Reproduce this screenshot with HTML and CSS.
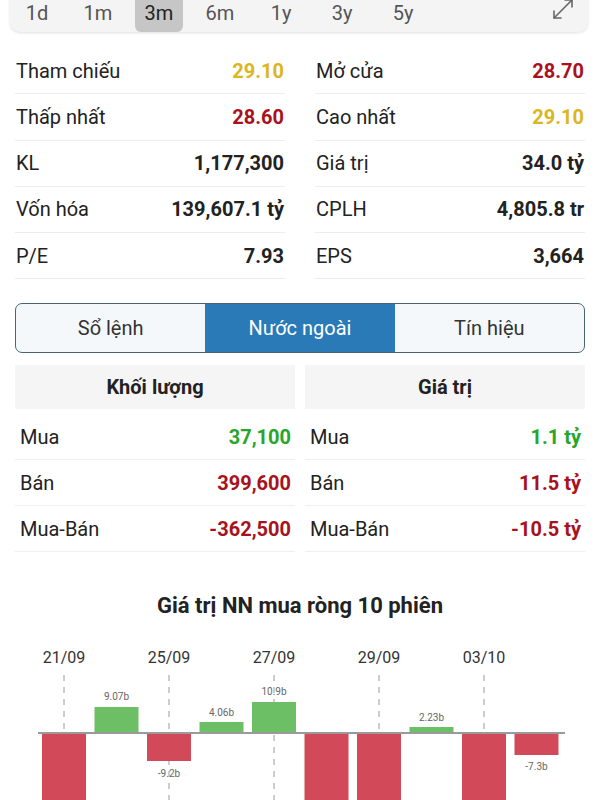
FILE: index.html
```html
<!DOCTYPE html>
<html lang="vi">
<head>
    <meta charset="UTF-8">
    <meta name="viewport" content="width=device-width, initial-scale=1.0">
    <title>Chi tiết cổ phiếu</title>
    <link rel="stylesheet" href="styles.css">
</head>
<body>
    <div class="range-bar">
        <span class="range-item">1d</span>
        <span class="range-item">1m</span>
        <span class="range-item active">3m</span>
        <span class="range-item">6m</span>
        <span class="range-item">1y</span>
        <span class="range-item">3y</span>
        <span class="range-item">5y</span>
        <span class="expand">
            <svg width="22" height="22" viewBox="0 0 22 22" fill="none" stroke="#666" stroke-width="1.6" stroke-linecap="round" stroke-linejoin="round">
                <path d="M2 20 L20 2"/>
                <path d="M13 2 H20 V9"/>
                <path d="M2 13 V20 H9"/>
            </svg>
        </span>
    </div>

    <div class="stats">
        <div class="stat"><span>Tham chiếu</span><b class="ref">29.10</b></div>
        <div class="stat"><span>Mở cửa</span><b class="down">28.70</b></div>
        <div class="stat"><span>Thấp nhất</span><b class="down">28.60</b></div>
        <div class="stat"><span>Cao nhất</span><b class="ref">29.10</b></div>
        <div class="stat"><span>KL</span><b>1,177,300</b></div>
        <div class="stat"><span>Giá trị</span><b>34.0 tỷ</b></div>
        <div class="stat"><span>Vốn hóa</span><b>139,607.1 tỷ</b></div>
        <div class="stat"><span>CPLH</span><b>4,805.8 tr</b></div>
        <div class="stat"><span>P/E</span><b>7.93</b></div>
        <div class="stat"><span>EPS</span><b>3,664</b></div>
    </div>

    <div class="tabs">
        <div class="tab">Sổ lệnh</div>
        <div class="tab active">Nước ngoài</div>
        <div class="tab">Tín hiệu</div>
    </div>

    <div class="foreign">
        <div class="foreign-head">Khối lượng</div>
        <div class="foreign-head">Giá trị</div>
        <div class="foreign-row"><span>Mua</span><b class="up">37,100</b></div>
        <div class="foreign-row"><span>Mua</span><b class="up">1.1 tỷ</b></div>
        <div class="foreign-row"><span>Bán</span><b class="down">399,600</b></div>
        <div class="foreign-row"><span>Bán</span><b class="down">11.5 tỷ</b></div>
        <div class="foreign-row"><span>Mua-Bán</span><b class="down">-362,500</b></div>
        <div class="foreign-row"><span>Mua-Bán</span><b class="down">-10.5 tỷ</b></div>
    </div>

    <div class="chart">
        <h2 class="chart-title">Giá trị NN mua ròng 10 phiên</h2>
        <svg class="chart-svg" width="600" height="183" viewBox="0 0 600 183">
            <!-- date labels -->
            <g class="dates">
                <text x="64" y="45">21/09</text>
                <text x="169" y="45">25/09</text>
                <text x="274" y="45">27/09</text>
                <text x="379" y="45">29/09</text>
                <text x="484" y="45">03/10</text>
            </g>
            <!-- value labels -->
            <g class="values">
                <text x="116.5" y="81.5">9.07b</text>
                <text x="169" y="158.5">-9.2b</text>
                <text x="221.5" y="97.5">4.06b</text>
                <text x="274" y="76.5">10.9b</text>
                <text x="431.5" y="102.5">2.23b</text>
                <text x="536.5" y="151.5">-7.3b</text>
            </g>
            <!-- grid lines -->
            <g stroke="#9a9a9a" stroke-width="1" stroke-dasharray="6 6">
                <line x1="64" y1="57" x2="64" y2="183"/>
                <line x1="169" y1="57" x2="169" y2="183"/>
                <line x1="274" y1="57" x2="274" y2="183"/>
                <line x1="379" y1="57" x2="379" y2="183"/>
                <line x1="484" y1="57" x2="484" y2="183"/>
            </g>
            <line x1="38" y1="115" x2="565" y2="115" stroke="#9a9a9a" stroke-width="2"/>
            <!-- bars -->
            <g class="neg">
                <rect x="42" y="116" width="44" height="70"/>
                <rect x="147" y="116" width="44" height="27"/>
                <rect x="304.5" y="116" width="44" height="70"/>
                <rect x="357" y="116" width="44" height="70"/>
                <rect x="462" y="116" width="44" height="70"/>
                <rect x="514.5" y="116" width="44" height="21"/>
            </g>
            <g class="pos">
                <rect x="94.5" y="89" width="44" height="25"/>
                <rect x="199.5" y="104" width="44" height="10"/>
                <rect x="252" y="84" width="44" height="30"/>
                <rect x="409.5" y="109" width="44" height="5"/>
            </g>
        </svg>
    </div>
</body>
</html>
```

FILE: styles.css
```css
body {
    margin: 0;
    background: #fff;
    font-family: Roboto, "Liberation Sans", sans-serif;
    color: #222;
    overflow: hidden;
}
.range-bar {
    display: flex;
    align-items: flex-end;
    gap: 13px;
    height: 42px;
    margin: -10px 12px 0 10px;
    padding-left: 3px;
    background: #f4f4f4;
    border-radius: 0 0 10px 10px;
    box-shadow: 0 1px 3px rgba(0,0,0,0.12);
}
.range-item {
    width: 48px;
    height: 100%;
    display: flex;
    align-items: flex-end;
    justify-content: center;
    box-sizing: border-box;
    padding-bottom: 7px;
    font-size: 20px;
    line-height: 24px;
    color: #555;
    border-radius: 6px;
}
.range-item.active {
    background: #c6c6c6;
    color: #222;
}
.expand {
    margin-left: auto;
    margin-right: 14px;
    align-self: flex-start;
    padding-top: 8px;
}
.stats {
    display: grid;
    grid-template-columns: 1fr 1fr;
    column-gap: 30px;
    margin: 16px 15px 0;
}
.stat {
    display: flex;
    justify-content: space-between;
    align-items: center;
    height: 45.25px;
    border-bottom: 1px solid #ededed;
    font-size: 20px;
    padding-right: 1px;
}
.stat span {
    padding-left: 1px;
}
.stat b, .foreign-row b {
    font-weight: 700;
    color: #222;
}
.ref { color: #dcb61f !important; }
.down { color: #a8121c !important; }
.up { color: #27a62a !important; }
.tabs {
    display: flex;
    margin: 24px 15px 0;
    height: 50px;
    box-sizing: border-box;
    border: 1.5px solid #46647c;
    border-radius: 7px;
    overflow: hidden;
    background: #f4f8fb;
}
.tab {
    flex: 1;
    display: flex;
    align-items: center;
    justify-content: center;
    font-size: 20px;
    color: #333;
}
.tab.active {
    background: #2a7ab8;
    color: #fff;
}
.foreign {
    display: grid;
    grid-template-columns: 1fr 1fr;
    column-gap: 10px;
    margin: 12px 15px 0;
}
.foreign-head {
    height: 44px;
    display: flex;
    align-items: center;
    justify-content: center;
    background: #f5f5f5;
    font-size: 20px;
    font-weight: 700;
    margin-bottom: 5px;
}
.foreign-row {
    display: flex;
    justify-content: space-between;
    align-items: center;
    height: 45px;
    padding: 0 4px 0 5px;
    border-bottom: 1px solid #efefef;
    font-size: 20px;
}
.chart {
    margin-top: 42px;
}
.chart-title {
    margin: 0;
    text-align: center;
    font-size: 22px;
    line-height: 24px;
    font-weight: 700;
    color: #222;
}
.chart-svg {
    display: block;
}
.dates text {
    font-family: Roboto, "Liberation Sans", sans-serif;
    font-size: 16px;
    fill: #333;
    text-anchor: middle;
}
.values text {
    font-family: Roboto, "Liberation Sans", sans-serif;
    font-size: 10px;
    fill: #666;
    text-anchor: middle;
}
.neg rect { fill: #d24a59; }
.pos rect { fill: #6cbf64; }
```
